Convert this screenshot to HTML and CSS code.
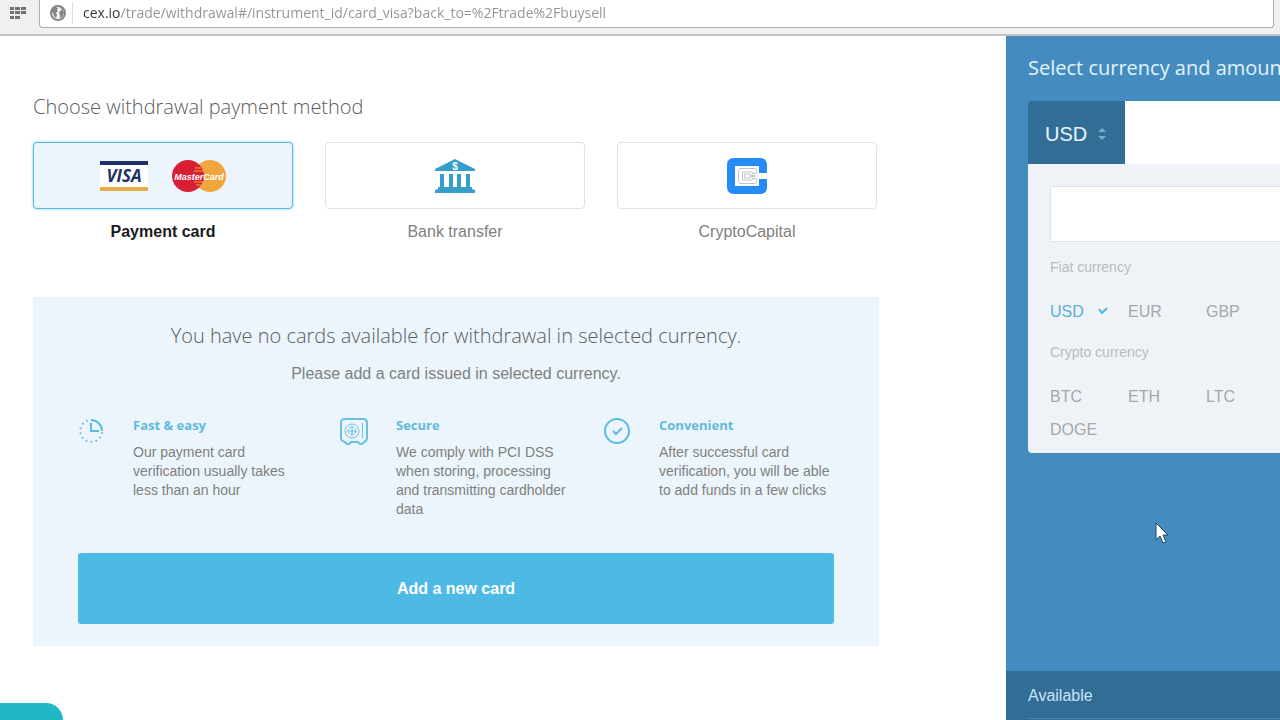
FILE: index.html
```html
<!DOCTYPE html>
<html lang="en">
<head>
    <meta charset="UTF-8">
    <title>Withdrawal</title>
    <link rel="stylesheet" href="styles.css">
</head>
<body>

<header class="toolbar">
    <button type="button" class="apps" aria-label="Apps">
        <svg width="16" height="12" viewBox="0 0 16 12" fill="#727272">
            <path d="M0 0h4v3H0zM5 0h5v3H5zM11 0h5v3h-5zM0 4h4v3H0zM5 4h5v3H5zM11 4h5v3h-5zM0 9h4v3H0zM5 9h5v3H5z"/>
        </svg>
    </button>
    <div class="address">
        <svg class="globe" width="16" height="16" viewBox="0 0 16 16">
            <circle cx="8" cy="8" r="7" fill="#f4f4f4" stroke="#858585" stroke-width="2"/>
            <path d="M2 5l3-3 3 1-1 2 1 1-2 2 1 2-1 3-2-2-1-3-2-1zM10 3l3 1 1 4-2 4-2 1v-3l-1-2 1-2 2-1z" fill="#858585"/>
        </svg>
        <input type="text" class="url" aria-label="Address" value="cex.io/trade/withdrawal#/instrument_id/card_visa?back_to=%2Ftrade%2Fbuysell">
    </div>
</header>

<div class="page">
    <main class="content">
        <h1>Choose withdrawal payment method</h1>

        <div class="methods">
            <label class="method">
                <input type="radio" name="method" checked>
                <span class="method-box">
                    <svg width="48" height="30" viewBox="0 0 48 30">
                        <rect width="48" height="30" fill="#fff"/>
                        <rect width="48" height="4" fill="#1c3268"/>
                        <rect y="26" width="48" height="4" fill="#e5ae48"/>
                        <text x="24" y="21" class="visa-text">VISA</text>
                    </svg>
                    <svg width="54" height="32" viewBox="0 0 54 32">
                        <circle cx="38" cy="16" r="16" fill="#f0a63c"/>
                        <circle cx="16" cy="16" r="16" fill="#d81e34"/>
                        <path d="M23 8h6M22 11h9M22 22h9M24 25h5" stroke="#f0a63c"/>
                        <text x="27" y="20" class="mc-text">MasterCard</text>
                    </svg>
                </span>
                <span class="method-name">Payment card</span>
            </label>
            <label class="method">
                <input type="radio" name="method">
                <span class="method-box">
                    <svg width="40" height="34" viewBox="0 0 40 34">
                        <path d="M20 0L40 10v2H0v-2zM5 15h4v13H5zM14 15h4v13h-4zM22 15h4v13h-4zM31 15h4v13h-4zM3 28h34v2l3 1v3H0v-3l3-1z" fill="#369fc9"/>
                        <text x="20" y="11" class="dollar">$</text>
                    </svg>
                </span>
                <span class="method-name">Bank transfer</span>
            </label>
            <label class="method">
                <input type="radio" name="method">
                <span class="method-box">
                    <svg width="40" height="36" viewBox="0 0 40 36">
                        <path d="M7 0h26q7 0 7 7v8h-8V8H8v20h24v-7h8v8q0 7-7 7H7q-7 0-7-7V7q0-7 7-7z" fill="#258bf5"/>
                        <path d="M13 10.500h14.500q2 0 2 2v3h-4v-1.500h-10v8h10v-1.500h4v3q0 2-2 2H13q-1.500 0-1.500-1.500v-12q0-1.500 1.500-1.500zM28 17.500h-4.500v-1.500h-6v4h6v-1.500H28" fill="none" stroke="#c3c5cc"/>
                    </svg>
                </span>
                <span class="method-name">CryptoCapital</span>
            </label>
        </div>

        <section class="no-cards">
            <h2>You have no cards available for withdrawal in selected currency.</h2>
            <p class="hint">Please add a card issued in selected currency.</p>

            <div class="features">
                <div class="feature">
                    <svg width="28" height="28" viewBox="0 0 28 28" fill="none" stroke="#5cbce0" stroke-width="2">
                        <path d="M13 2a11 11 0 0 1 11 11M13 5v8h8"/>
                        <path d="M24 15A11 11 0 1 1 12 2" stroke-linecap="round" stroke-dasharray="0 5"/>
                    </svg>
                    <div>
                        <h3>Fast &amp; easy</h3>
                        <p>Our payment card verification usually takes less than an hour</p>
                    </div>
                </div>
                <div class="feature">
                    <svg width="28" height="28" viewBox="0 0 28 28" fill="none" stroke="#6bc0e0">
                        <path d="M4 1h18q4 0 4 4v15q0 3-3 4l-2 2h-2l-2-2h-7l-2 2H6l-2-2q-4-1-4-4V5q0-4 4-4z" stroke-width="2"/>
                        <circle cx="11" cy="13" r="7"/>
                        <circle cx="11" cy="13" r="4" stroke-dasharray="2 1"/>
                        <path d="M11 8v10M6 13h10M21.500 5v15"/>
                    </svg>
                    <div>
                        <h3>Secure</h3>
                        <p>We comply with PCI DSS when storing, processing and transmitting cardholder data</p>
                    </div>
                </div>
                <div class="feature">
                    <svg width="28" height="28" viewBox="0 0 28 28" fill="none" stroke="#5cbce0" stroke-width="2">
                        <circle cx="13" cy="13" r="12"/>
                        <path d="M9 13l3 3 6-6"/>
                    </svg>
                    <div>
                        <h3>Convenient</h3>
                        <p>After successful card verification, you will be able to add funds in a few clicks</p>
                    </div>
                </div>
            </div>

            <button type="button" class="add-card">Add a new card</button>
        </section>
    </main>

    <aside class="sidebar">
        <div class="amount">
            <h2>Select currency and amount</h2>
            <div class="amount-row">
                <div class="currency">
                    <select aria-label="Currency">
                        <option>USD</option>
                        <option>EUR</option>
                        <option>GBP</option>
                    </select>
                    <svg class="arrows" width="8" height="14" viewBox="0 0 8 14" fill="#79aac8">
                        <path d="M4 1l4 4H0zM4 13l4-4H0z"/>
                    </svg>
                </div>
                <input type="text" class="amount-input" aria-label="Amount">
            </div>
            <div class="currency-list">
                <input type="text" class="search" aria-label="Search currency">
                <h4>Fiat currency</h4>
                <div class="options">
                    <button type="button" class="selected">USD
                        <svg width="10" height="8" viewBox="0 0 10 8" fill="none" stroke="#4db8df" stroke-width="2"><path d="M1 2l3 4 5-5"/></svg>
                    </button>
                    <button type="button">EUR</button>
                    <button type="button">GBP</button>
                </div>
                <h4>Crypto currency</h4>
                <div class="options">
                    <button type="button">BTC</button>
                    <button type="button">ETH</button>
                    <button type="button">LTC</button>
                    <button type="button">DOGE</button>
                </div>
            </div>
        </div>
        <div class="available">
            <div class="available-title">Available</div>
        </div>
    </aside>
</div>

<button type="button" class="chat" aria-label="Chat"></button>

<svg class="cursor" width="14" height="22" viewBox="0 0 14 22">
    <path d="M1 1v17l4-4 3 7 3-1-3-7h5z" fill="#fff" stroke="#24435c"/>
</svg>

</body>
</html>
```
FILE: styles.css
```css
* {
    box-sizing: border-box;
}
body {
    display: flex;
    flex-direction: column;
    min-height: 100vh;
    margin: 0;
    background-color: #fff;
    color: #808080;
    font-family: "Liberation Sans", Arial, sans-serif;
    font-size: 16px;
    overflow: hidden;
}
h1, h2, h3, h4, p {
    margin: 0;
}
h1, h2, h3 {
    font-family: "Open Sans", sans-serif;
}
button, input, select {
    font-family: inherit;
    border: none;
    padding: 0;
    margin: 0;
}
button {
    cursor: pointer;
}

/* browser bar */
.toolbar {
    display: flex;
    height: 36px;
    padding: 0 6px 6px 0;
    background-color: #f0f0f0;
    border-bottom: 2px solid #c4c4c4;
}
.apps {
    width: 39px;
    padding-left: 10px;
    background: none;
    text-align: left;
}
.address {
    display: flex;
    flex: 1;
    align-items: center;
    padding: 0 10px 2px;
    background-color: #fff;
    border: 1px solid #adadad;
    border-top: none;
    border-radius: 0 0 3px 4px;
}
.url {
    flex: 1;
    height: 22px;
    margin-left: 6px;
    padding-left: 10px;
    border-left: 1px solid #ddd;
    outline: none;
    color: transparent;
    background: linear-gradient(to right, #333 47px, #929292 47px);
    background-clip: text;
    -webkit-background-clip: text;
    font-family: "Open Sans", sans-serif;
    font-size: 14px;
}

.page {
    display: flex;
    flex: 1;
}
.content {
    flex: 1;
    padding: 56px 127px 0 33px;
}
.content h1,
.no-cards h2 {
    color: #5c5c5c;
    font-size: 20px;
    font-weight: 300;
    line-height: 30px;
}

/* payment methods */
.methods {
    display: grid;
    grid-template-columns: repeat(3, 1fr);
    gap: 32px;
    margin: 20px 2px 0 0;
}
.method {
    text-align: center;
    cursor: pointer;
}
.method input {
    position: absolute;
    opacity: 0;
}
.method-box {
    display: flex;
    align-items: center;
    justify-content: center;
    gap: 24px;
    height: 67px;
    margin-bottom: 13px;
    border: 1px solid #e2e2e2;
    border-radius: 4px;
}
.method-name {
    line-height: 20px;
}
.method input:checked + .method-box {
    background-color: #ecf5fb;
    border-color: #5fb9da;
    box-shadow: 0 0 3px #6fd0ee;
}
.method input:checked ~ .method-name {
    color: #1a1a1a;
    font-weight: bold;
}
.visa-text {
    fill: #1c3268;
    font-family: "Open Sans", sans-serif;
    font-size: 17px;
    font-weight: 700;
    font-style: italic;
    text-anchor: middle;
}
.mc-text {
    fill: #fff;
    font-size: 9px;
    font-weight: bold;
    font-style: italic;
    text-anchor: middle;
}
.dollar {
    fill: #fff;
    font-size: 10px;
    font-weight: bold;
    text-anchor: middle;
}

.no-cards {
    margin-top: 55px;
    padding: 24px 45px 22px;
    background-color: #ecf5fb;
    text-align: center;
}
.hint {
    margin-top: 13px;
    line-height: 20px;
}
.features {
    display: grid;
    grid-template-columns: repeat(3, 1fr);
    gap: 33px;
    margin: 32px 0 34px;
    text-align: left;
}
.feature {
    display: flex;
    gap: 27px;
    font-size: 14px;
    line-height: 19px;
}
.feature svg {
    flex: none;
    margin-top: 2px;
    overflow: visible;
}
.feature h3 {
    margin-bottom: 8px;
    color: #62b9e0;
    font-size: 13px;
    font-weight: 700;
    line-height: 19px;
}
.add-card {
    display: block;
    width: 100%;
    height: 71px;
    background-color: #4dbae6;
    border-radius: 3px;
    color: #fff;
    font-size: 16px;
    font-weight: bold;
}

/* amount sidebar */
.sidebar {
    display: flex;
    flex-direction: column;
    width: 274px;
    background-color: #448cbf;
    overflow: hidden;
}
.amount {
    flex: 1;
    padding: 17px 0 0 22px;
}
.amount h2 {
    margin-bottom: 18px;
    color: #e2f3fc;
    font-size: 20px;
    font-weight: 400;
    line-height: 30px;
    white-space: nowrap;
}
.amount-row {
    display: flex;
    height: 63px;
}
.currency {
    position: relative;
    width: 97px;
}
.currency select {
    appearance: none;
    width: 100%;
    height: 100%;
    padding: 2px 0 0 17px;
    background-color: #326d96;
    border-radius: 4px 0 0 0;
    color: #e8f5fc;
    font-size: 20px;
}
.arrows {
    position: absolute;
    top: 26px;
    right: 19px;
    pointer-events: none;
}
.amount-input {
    flex: 1;
    min-width: 0;
    background-color: #fff;
}
.currency-list {
    padding: 22px 0 7px 22px;
    background-color: #eff3f8;
    border-radius: 0 0 0 4px;
}
.search {
    display: block;
    width: 100%;
    height: 56px;
    background-color: #fff;
    border: 1px solid #dfe2e6;
    border-right: none;
}
.currency-list h4 {
    color: #b8bcbf;
    font-size: 14px;
    font-weight: normal;
    line-height: 20px;
    margin: 15px 0 18px;
}
.options {
    display: grid;
    grid-template-columns: repeat(3, 78px);
}
.options button {
    height: 33px;
    background: none;
    color: #a5a8ab;
    font-size: 16px;
    text-align: left;
}
.options .selected {
    color: #59b0dc;
}
.options svg {
    margin: 0 0 2px 10px;
}
.options + h4 {
    margin-top: 14px;
}
.available {
    padding: 0 0 1px 22px;
    background-color: #326d96;
}
.available-title {
    height: 48px;
    border-bottom: 1px solid #4d83a8;
    color: #c5e6f6;
    line-height: 50px;
}

.chat {
    position: fixed;
    left: 0;
    bottom: 0;
    width: 63px;
    height: 17px;
    background-color: #20b8c5;
    border-radius: 0 24px 0 0;
}
.cursor {
    position: absolute;
    left: 1155px;
    top: 522px;
}
```
